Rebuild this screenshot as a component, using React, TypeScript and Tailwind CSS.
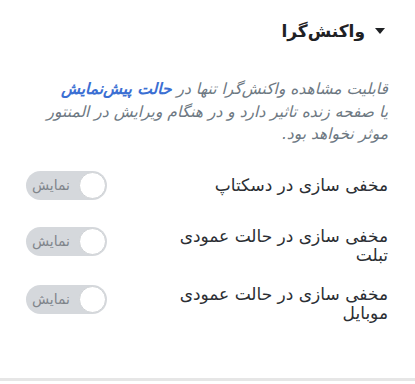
import React from "react";

const rows = [
  { label: "مخفی سازی در دسکتاپ", cls: "mt-[25px] items-center" },
  { label: "مخفی سازی در حالت عمودی تبلت", cls: "mt-[27px] items-start" },
  { label: "مخفی سازی در حالت عمودی موبایل", cls: "mt-[20px] items-start" },
];

function Toggle() {
  return (
    <div className="flex h-[29px] w-[81px] shrink-0 items-center justify-between rounded-full bg-[#d5d8dc] pl-[6px] pr-[1px]" dir="ltr">
      <span className="text-[14px] text-[#80858b]">نمایش</span>
      <span className="h-[27px] w-[27px] rounded-full border border-[#d0d3d6] bg-white" />
    </div>
  );
}

export default function App() {
  return (
    <div dir="rtl" className="h-[384px] w-[415px] bg-white" style={{ fontFamily: '"DejaVu Sans", sans-serif' }}>
      <div className="flex h-[381px] flex-col border-b-[3px] border-[#e6e6e6] pr-[27px] pl-[26px]">
        {/* عنوان بخش */}
        <div className="mt-[19px] flex items-center gap-[10px] pr-[3px]">
          <svg width="10" height="6" viewBox="0 0 10 6" className="shrink-0">
            <path d="M0 0 H10 L5 6 Z" fill="#1f2124" />
          </svg>
          <h2 className="text-[17px] font-bold leading-[24px] text-[#1f2124]">واکنش‌گرا</h2>
        </div>

        {/* توضیحات */}
        <p className="mt-[35px] text-[15.5px] italic leading-[22.5px] text-[#6d7882]">
          قابلیت مشاهده واکنش‌گرا تنها در{" "}
          <a href="#" className="font-bold text-[#3b6fd3]">حالت پیش‌نمایش</a>
          <br />
          یا صفحه زنده تاثیر دارد و در هنگام ویرایش در المنتور
          <br />
          موثر نخواهد بود.
        </p>

        {/* تنظیمات */}
        <div className="flex flex-col">
          {rows.map((r) => (
            <div key={r.label} className={"flex justify-between " + r.cls}>
              <span className="w-[215px] text-[17px] leading-[19px] text-[#2b2e33]">{r.label}</span>
              <Toggle />
            </div>
          ))}
        </div>
      </div>
    </div>
  );
}
